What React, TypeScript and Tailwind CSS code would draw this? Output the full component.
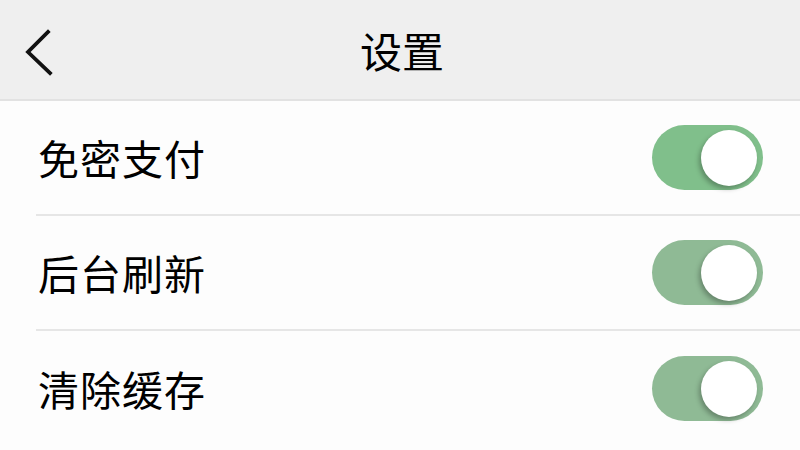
import { useState } from 'react';

type Item = { id: string; label: string; on: boolean; tone: 'bright' | 'muted' };

const initialItems: Item[] = [
  { id: 'nopwd', label: '免密支付', on: true, tone: 'bright' },
  { id: 'refresh', label: '后台刷新', on: true, tone: 'muted' },
  { id: 'cache', label: '清除缓存', on: true, tone: 'muted' },
];

const Toggle = ({ on, tone, onClick }: { on: boolean; tone: Item['tone']; onClick: () => void }) => {
  const track = on ? (tone === 'bright' ? 'bg-[#80bf8b]' : 'bg-[#8fba95]') : 'bg-[#e5e5e5]';
  return (
    <button
      onClick={onClick}
      className={`relative h-[65px] w-[111px] shrink-0 rounded-full ${track}`}
    >
      <span
        className={`absolute top-[5px] h-[56px] w-[56px] rounded-full bg-white shadow-[-2px_3px_5px_rgba(0,0,0,0.28)] ${
          on ? 'right-[6px]' : 'left-[6px]'
        }`}
      />
    </button>
  );
};

export default function App() {
  const [items, setItems] = useState(initialItems);

  const flip = (id: string) =>
    setItems((prev) => prev.map((it) => (it.id === id ? { ...it, on: !it.on } : it)));

  return (
    <div
      className="flex h-[450px] w-[800px] flex-col overflow-hidden bg-[#fdfdfd] text-black"
      style={{ fontFamily: '"Noto Sans CJK SC", "Noto Sans", sans-serif' }}
    >
      <header className="relative flex h-[101px] shrink-0 items-center justify-center border-b-2 border-[#e2e2e2] bg-[#efefef]">
        <button className="absolute left-[22px] top-[28px]">
          <svg width="32" height="50" viewBox="0 0 32 50" fill="none">
            <path d="M26 4 L6 24 L28 45" stroke="#111" strokeWidth="3.8" strokeLinecap="square" />
          </svg>
        </button>
        <h1 className="pl-[4px] text-[42px] leading-none">设置</h1>
      </header>

      <ul className="flex flex-col">
        {items.map((it, i) => (
          <li key={it.id} className="pl-[36px]">
            <div
              className={`flex h-[115px] items-center justify-between pr-[37px] ${
                i < items.length - 1 ? 'border-b-2 border-[#e6e6e6]' : ''
              }`}
            >
              <span className="pl-[2px] text-[41px] leading-none tracking-[1px]">{it.label}</span>
              <Toggle on={it.on} tone={it.tone} onClick={() => flip(it.id)} />
            </div>
          </li>
        ))}
      </ul>
    </div>
  );
}
